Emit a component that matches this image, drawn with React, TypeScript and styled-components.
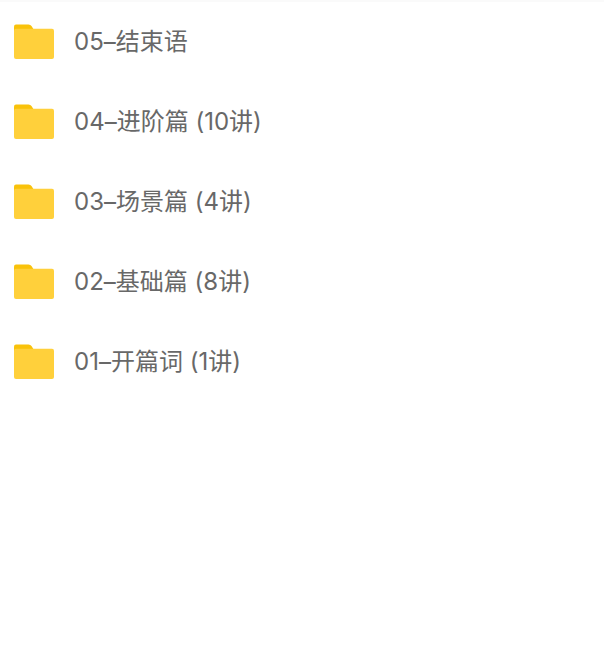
import React from "react";
import styled, { createGlobalStyle } from "styled-components";

const GlobalStyle = createGlobalStyle`
  body {
    margin: 0;
    background: #fff;
    font-family: Inter, "Noto Sans CJK SC", sans-serif;
  }
`;

const Page = styled.main`
  border-top: 2px solid #fafafa;
`;

const FolderList = styled.ul`
  margin: 0;
  padding: 0;
  list-style: none;
`;

const FolderRow = styled.li`
  display: flex;
  align-items: center;
  gap: 20px;
  height: 80px;
  padding: 0 14px;
`;

const FolderIcon = styled.svg`
  flex: none;
  width: 40px;
  height: 36px;
`;

const FolderName = styled.span`
  color: #686868;
  font-size: 24px;
  font-weight: 400;
  font-variant-ligatures: no-contextual;
  line-height: 32px;
  white-space: nowrap;
`;

const folders = [
  "05–结束语",
  "04–进阶篇 (10讲)",
  "03–场景篇 (4讲)",
  "02–基础篇 (8讲)",
  "01–开篇词 (1讲)",
];

export default function App() {
  return (
    <>
      <GlobalStyle />
      <Page>
        <FolderList>
          {folders.map((name) => (
            <FolderRow key={name}>
              <FolderIcon viewBox="0 0 40 36" aria-hidden="true">
                <path d="M0 10V2.5Q0 .5 2 .5H14.5Q16.5 .5 17.5 2L20 6V10Z" fill="#f9c20a" />
                <rect y="4.7" width="40" height="30.3" rx="2" fill="#ffd03b" />
              </FolderIcon>
              <FolderName>{name}</FolderName>
            </FolderRow>
          ))}
        </FolderList>
      </Page>
    </>
  );
}
